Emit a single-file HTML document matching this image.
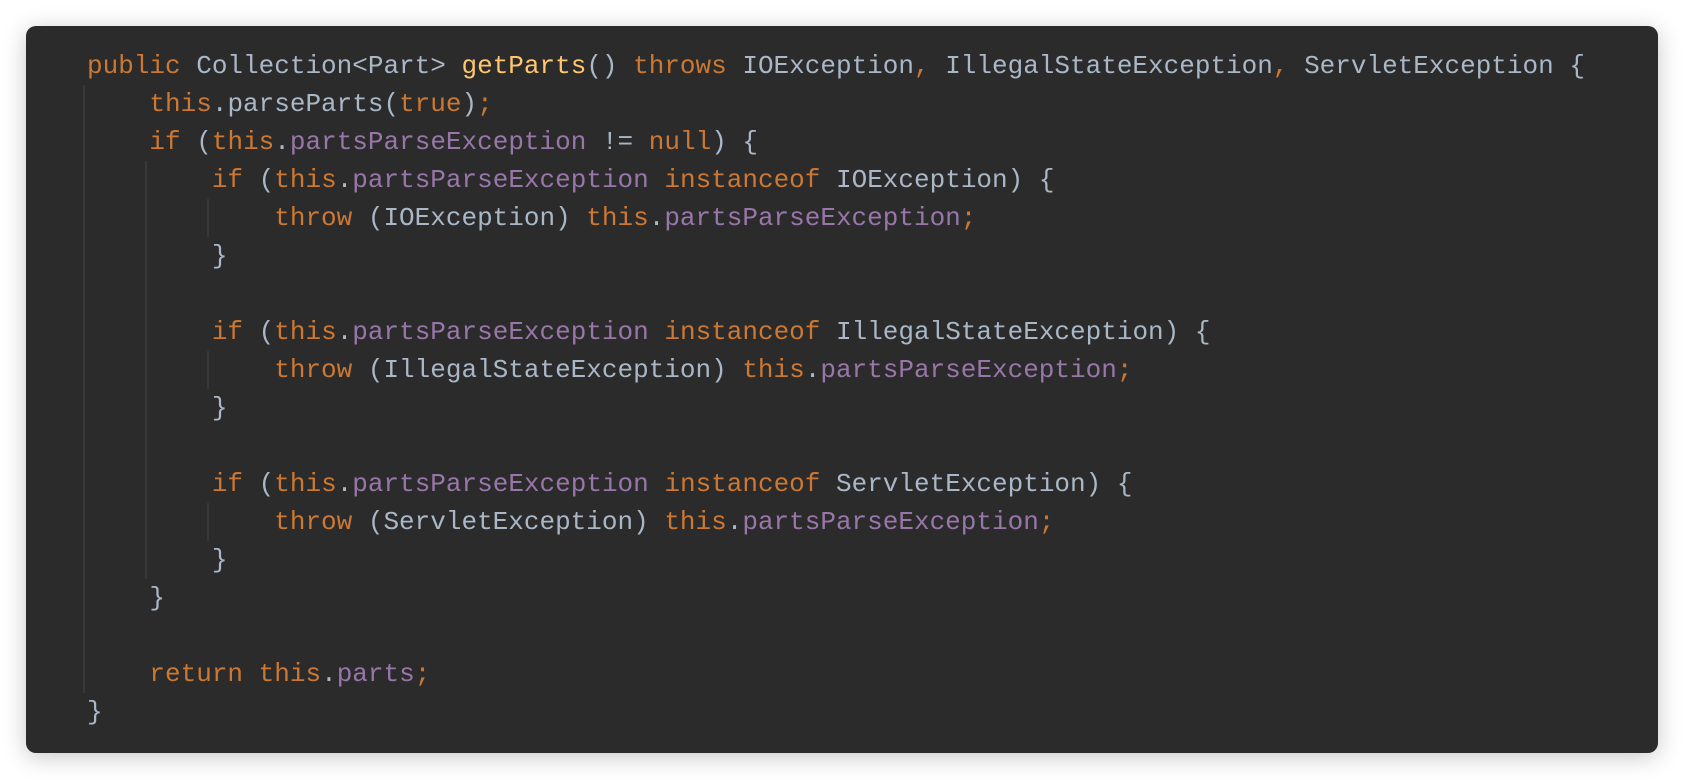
<!DOCTYPE html>
<html><head><style>
html,body{margin:0;padding:0;background:#fff;width:1684px;height:780px;overflow:hidden}
.p{position:absolute;left:26px;top:26px;width:1632px;height:727px;background:#2b2b2b;border-radius:10px;box-shadow:0 4px 24px rgba(0,0,0,0.22)}
pre{position:absolute;left:61px;top:21px;margin:0;font-family:"Liberation Mono",monospace;font-size:26px;line-height:38px;color:#a9b7c6;letter-spacing:0}
.k{color:#cc7832}.m{color:#ffc66d}.f{color:#9876aa}
.g{position:absolute;width:2px;background:#383838}
</style></head><body>
<div class="p">
<div class="g" style="left:57px;top:59px;height:608px"></div>
<div class="g" style="left:119px;top:135px;height:418px"></div>
<div class="g" style="left:181px;top:173px;height:38px"></div>
<div class="g" style="left:181px;top:325px;height:38px"></div>
<div class="g" style="left:181px;top:477px;height:38px"></div>
<pre><span class="k">public</span> Collection&lt;Part&gt; <span class="m">getParts</span>() <span class="k">throws</span> IOException<span class="k">,</span> IllegalStateException<span class="k">,</span> ServletException {
    <span class="k">this</span>.parseParts(<span class="k">true</span>)<span class="k">;</span>
    <span class="k">if</span> (<span class="k">this</span>.<span class="f">partsParseException</span> != <span class="k">null</span>) {
        <span class="k">if</span> (<span class="k">this</span>.<span class="f">partsParseException</span> <span class="k">instanceof</span> IOException) {
            <span class="k">throw</span> (IOException) <span class="k">this</span>.<span class="f">partsParseException</span><span class="k">;</span>
        }

        <span class="k">if</span> (<span class="k">this</span>.<span class="f">partsParseException</span> <span class="k">instanceof</span> IllegalStateException) {
            <span class="k">throw</span> (IllegalStateException) <span class="k">this</span>.<span class="f">partsParseException</span><span class="k">;</span>
        }

        <span class="k">if</span> (<span class="k">this</span>.<span class="f">partsParseException</span> <span class="k">instanceof</span> ServletException) {
            <span class="k">throw</span> (ServletException) <span class="k">this</span>.<span class="f">partsParseException</span><span class="k">;</span>
        }
    }

    <span class="k">return</span> <span class="k">this</span>.<span class="f">parts</span><span class="k">;</span>
}</pre>
</div>
</body></html>
